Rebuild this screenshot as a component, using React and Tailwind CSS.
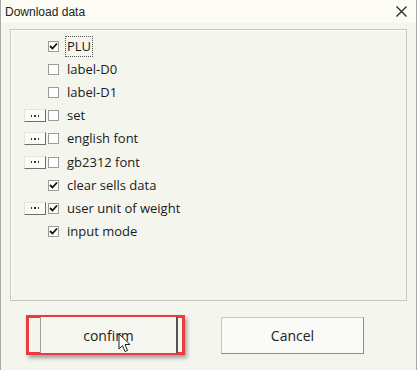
import React from 'react';

const items = [
  { label: 'PLU', checked: true, more: false, focus: true },
  { label: 'label-D0', checked: false, more: false },
  { label: 'label-D1', checked: false, more: false },
  { label: 'set', checked: false, more: true },
  { label: 'english font', checked: false, more: true },
  { label: 'gb2312 font', checked: false, more: true },
  { label: 'clear sells data', checked: true, more: false },
  { label: 'user unit of weight', checked: true, more: true },
  { label: 'input mode', checked: true, more: false },
];

function CheckBox({ checked }) {
  return (
    <div className="w-[11px] h-[11px] border border-[#9a9c98] bg-white flex items-center justify-center shrink-0">
      {checked && (
        <svg width="9" height="9" viewBox="0 0 9 9">
          <path d="M1 4 L3.5 6.5 L8 1.5" fill="none" stroke="#111" strokeWidth="1.8" />
        </svg>
      )}
    </div>
  );
}

function MoreButton() {
  return (
    <div className="w-[22px] h-[13px] bg-[#fbfbf7] border-t border-l border-t-[#e4e4de] border-l-[#e4e4de] border-r border-b border-r-[#6e6e6a] border-b-[#6e6e6a] flex items-center justify-center gap-[2px]">
      <span className="w-[1.5px] h-[1.5px] bg-[#333]" />
      <span className="w-[1.5px] h-[1.5px] bg-[#333]" />
      <span className="w-[1.5px] h-[1.5px] bg-[#333]" />
    </div>
  );
}

function Cursor() {
  return (
    <svg className="absolute left-[77px] top-[16px]" width="14" height="22" viewBox="0 0 14 22">
      <path d="M1 1 L1 16 L4.5 12.5 L7 18.5 L9.5 17.5 L7 11.5 L12 11.5 Z" fill="#fff" stroke="#222" strokeWidth="1" />
    </svg>
  );
}

export default function App() {
  return (
    <div className="w-[417px] h-[370px] flex flex-col bg-[#f4f6ee] border-l border-r border-[#a8aaa4] overflow-hidden" style={{ fontFamily: '"Open Sans", "Liberation Sans", sans-serif' }}>
      <div className="h-[23px] bg-[#fcfcf4] flex items-center justify-between pl-[4px] pr-[9px] shrink-0">
        <span className="text-[12px] text-[#222]" style={{ fontFamily: '"Liberation Sans", sans-serif' }}>Download data</span>
        <svg width="11" height="11" viewBox="0 0 11 11">
          <path d="M0.5 0.5 L10.5 10.5 M10.5 0.5 L0.5 10.5" stroke="#222" strokeWidth="1.2" />
        </svg>
      </div>
      <div className="px-[9px] pt-[6px]">
        <div className="h-[272px] border border-[#c6c8c0] shadow-[inset_1px_1px_0_#ffffff] pt-[5px]">
          {items.map((it) => (
            <div key={it.label} className="h-[23.1px] flex items-center">
              <div className="w-[37px] pl-[13px] flex items-center">
                {it.more && <MoreButton />}
              </div>
              <CheckBox checked={it.checked} />
              <span
                className={`ml-[6px] px-[1px] text-[13px] leading-[19px] text-[#1a1a1a] ${it.focus ? 'border border-dotted border-[#555]' : 'border border-transparent'}`}
              >
                {it.label}
              </span>
            </div>
          ))}
        </div>
      </div>
      <div className="flex items-center pt-[14px]">
        <div className="ml-[25px] w-[159px] h-[40px] border-[3px] border-[#ec3b40] shadow-[2px_3px_4px_rgba(0,0,0,0.35)] flex items-stretch">
          <div className="relative ml-[11px] w-[138px] my-[-1px] bg-[#f6f7f1] border-l border-[#a0a09c] border-r-2 border-r-[#555] flex items-center justify-center">
            <span className="text-[14px] text-[#222]">confirm</span>
            <Cursor />
          </div>
        </div>
        <div className="ml-[36px] w-[143px] h-[37px] bg-[#fafaf6] border border-[#c8c8c2] border-r-[#8c8c88] border-b-[#8c8c88] flex items-center justify-center">
          <span className="text-[14px] text-[#222]">Cancel</span>
        </div>
      </div>
    </div>
  );
}
